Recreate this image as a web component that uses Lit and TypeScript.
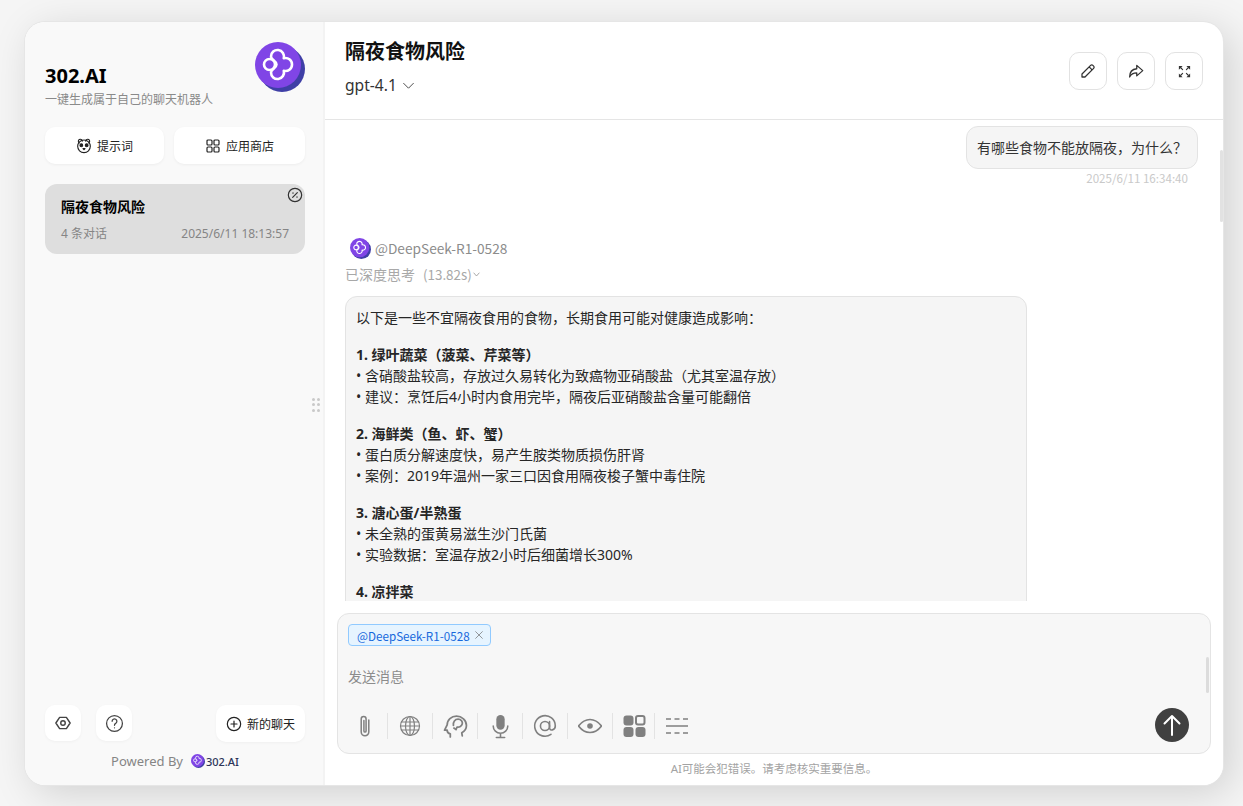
import { LitElement, html, css, svg } from "lit";
import { customElement } from "lit/decorators.js";

const clover = svg`<path d="M16 14.500A6.500 6.500 0 1 1 28.760 16.240A6.500 6.500 0 1 1 28.760 28.760A6.500 6.500 0 1 1 16 30.500C16 27 21.500 26.500 21.500 22.500C21.500 18.500 16 18 16 14.500Z" fill="none" stroke="#fff" stroke-width="2.600" stroke-linejoin="round"/><circle cx="14.500" cy="22.500" r="5.500" fill="#8045e6" stroke="#fff" stroke-width="2.600"/>`;

const logo = (cls: string) => html`<svg class=${cls} viewBox="0 0 50 50"><circle cx="27" cy="27" r="23" fill="#3f3fa6"/><circle cx="23" cy="23" r="23" fill="#8045e6"/>${clover}</svg>`;

const ic = (body: unknown, size = 16, sw = 1.5) => html`<svg width=${size} height=${size} viewBox="0 0 24 24" fill="none" stroke="currentColor" stroke-width=${sw} stroke-linecap="round" stroke-linejoin="round">${body}</svg>`;

const bodyText = [
  { lead: "", lines: ["以下是一些不宜隔夜食用的食物，长期食用可能对健康造成影响："] },
  { lead: "1. 绿叶蔬菜（菠菜、芹菜等）", lines: ["• 含硝酸盐较高，存放过久易转化为致癌物亚硝酸盐（尤其室温存放）", "• 建议：烹饪后4小时内食用完毕，隔夜后亚硝酸盐含量可能翻倍"] },
  { lead: "2. 海鲜类（鱼、虾、蟹）", lines: ["• 蛋白质分解速度快，易产生胺类物质损伤肝肾", "• 案例：2019年温州一家三口因食用隔夜梭子蟹中毒住院"] },
  { lead: "3. 溏心蛋/半熟蛋", lines: ["• 未全熟的蛋黄易滋生沙门氏菌", "• 实验数据：室温存放2小时后细菌增长300%"] },
  { lead: "4. 凉拌菜", lines: [] as string[] },
];

@customElement("app-root")
export class AppRoot extends LitElement {
  static styles = css`
    :host { display: block; height: 806px; box-sizing: border-box; padding: 22px 20px 21px 25px; background: #f5f5f5; font-family: "Noto Sans", "Noto Sans CJK SC", sans-serif; color: #1f1f1f; overflow: hidden; }
    .card { height: 100%; display: flex; background: #fff; border-radius: 20px; box-shadow: 0 0 0 1px #e6e6e6, 8px 8px 40px rgba(0,0,0,.15); overflow: hidden; }
    .side { width: 300px; flex: none; box-sizing: border-box; background: #f9f9f9; border-right: 2px solid #f3f3f3; padding: 20px 18px 13px 20px; display: flex; flex-direction: column; }
    .brand { display: flex; justify-content: space-between; height: 85px; }
    .brand-text { padding-top: 20px; }
    .brand h1 { margin: 0; font-size: 20px; line-height: 28px; font-weight: 700; color: #000; }
    .brand p { margin: 1px 0 0; font-size: 12px; line-height: 18px; color: #8a8a8a; white-space: nowrap; }
    .biglogo { width: 50px; height: 50px; flex: none; }
    .tabs { display: flex; gap: 10px; }
    .tab { height: 37px; border-radius: 10px; background: #fff; box-shadow: 0 1px 3px rgba(0,0,0,.05); display: flex; align-items: center; justify-content: center; gap: 5px; font-size: 12px; color: #222; }
    .tab.a { width: 119px; }
    .tab.b { width: 131px; }
    .session { position: relative; margin-top: 20px; height: 70px; box-sizing: border-box; padding: 12px 16px 0; background: #dedede; border-radius: 12px; }
    .session h2 { margin: 0; font-size: 14px; line-height: 21px; font-weight: 700; color: #000; }
    .meta { display: flex; justify-content: space-between; margin-top: 7px; font-size: 12px; line-height: 20px; color: #858585; }
    .close { position: absolute; top: 3px; right: 2px; color: #333; display: flex; }
    .foot { margin-top: auto; display: flex; align-items: flex-start; }
    .sq { width: 36px; height: 36px; border-radius: 10px; background: #fff; display: flex; align-items: center; justify-content: center; color: #444; box-shadow: 0 1px 3px rgba(0,0,0,.04); }
    .sq + .sq { margin-left: 15px; }
    .new { margin-left: auto; width: 89px; height: 37px; border-radius: 10px; background: #fff; display: flex; align-items: center; justify-content: center; gap: 5px; font-size: 12px; color: #222; box-shadow: 0 1px 3px rgba(0,0,0,.04); }
    .powered { display: flex; align-items: center; justify-content: center; margin-top: 8px; height: 22px; font-size: 13px; color: #858585; }
    .powered b { font-weight: 500; color: #2c3458; font-size: 11px; }
    .tiny { width: 14px; height: 14px; margin: 0 1px 0 8px; }
    .main { flex: 1; min-width: 0; display: flex; flex-direction: column; position: relative; }
    .grip { position: absolute; left: -13px; top: 376px; width: 10px; height: 14px; display: grid; grid-template-columns: 3px 3px; gap: 2px 2px; }
    .grip i { width: 3px; height: 3px; border-radius: 50%; background: #c9c9c9; }
    .head { height: 98px; flex: none; box-sizing: border-box; border-bottom: 1px solid #e5e5e5; padding: 14px 20px 0 20px; display: flex; justify-content: space-between; }
    .head h2 { margin: 0; font-size: 20px; line-height: 32px; font-weight: 700; color: #111; }
    .model { display: flex; align-items: center; gap: 5px; margin-top: 6px; font-size: 15.600px; line-height: 22px; color: #333; }
    .actions { display: flex; gap: 10px; padding-top: 16px; }
    .act { width: 38px; height: 38px; box-sizing: border-box; border: 1px solid #e2e2e2; border-radius: 10px; display: flex; align-items: center; justify-content: center; color: #333; }
    .msgs { flex: 1; min-height: 0; overflow: hidden; position: relative; padding: 6px 20px 0; }
    .sb { position: absolute; right: 0; top: 30px; width: 3px; height: 72px; background: #e2e2e2; border-radius: 2px; }
    .user { display: flex; flex-direction: column; align-items: flex-end; padding-right: 5px; }
    .bubble { background: #f5f5f5; border: 1px solid #e3e3e3; border-radius: 12px; font-size: 14px; line-height: 21px; padding: 10px; color: #333; width: 232px; box-sizing: border-box; white-space: nowrap; }
    .time { font-family: "Noto Sans CJK SC", sans-serif; font-size: 11.600px; line-height: 18px; color: #c9c9c9; padding-right: 10px; }
    .who { display: flex; align-items: center; gap: 4px; margin-top: 50px; padding-left: 5px; height: 22px; font-family: "Noto Sans CJK SC", sans-serif; font-size: 13.700px; color: #8c8c8c; }
    .avatar { width: 21px; height: 21px; }
    .think { margin-top: 4px; height: 22px; display: flex; align-items: center; font-family: "Noto Sans CJK SC", sans-serif; font-size: 14px; color: #a8a8a8; }
    .think span { margin-left: 8px; font-size: 13.400px; }
    .think svg { color: #8c8c8c; }
    .answer { margin-top: 11px; width: 682px; box-sizing: border-box; background: #f5f5f5; border: 1px solid #e3e3e3; border-radius: 12px; padding: 10px; font-size: 14px; line-height: 21px; color: #262626; }
    .answer p { margin: 0 0 16px; }
    .answer strong { display: block; font-weight: 700; }
    .answer div { white-space: nowrap; }
    .inputwrap { flex: none; padding: 12px 12px 0 12px; background: #fff; position: relative; }
    .box { height: 141px; box-sizing: border-box; background: #f7f7f7; border: 1px solid #e4e4e4; border-radius: 12px; position: relative; padding: 10px 10px 0; display: flex; flex-direction: column; }
    .chip { align-self: flex-start; height: 22px; box-sizing: border-box; border: 1px solid #91caff; background: #e6f4ff; border-radius: 4px; display: flex; align-items: center; gap: 4px; padding: 0 6px 0 8px; font-family: "Noto Sans CJK SC", sans-serif; font-size: 11.650px; color: #1668dc; }
    .chip svg { color: #666; }
    .ph { margin-top: 20px; font-size: 14px; line-height: 21px; color: #8c8c8c; }
    .tools { display: flex; align-items: center; height: 28px; margin-top: 25px; margin-left: -5px; }
    .t { width: 45px; height: 26px; display: flex; align-items: center; justify-content: center; color: #808080; border-left: 1px solid #e3e3e3; box-sizing: border-box; }
    .t:first-child { border-left: none; width: 44px; }
    .t.last { width: 42px; }
    .send { position: absolute; right: 21px; bottom: 11px; width: 34px; height: 34px; border-radius: 50%; background: #404040; color: #fff; display: flex; align-items: center; justify-content: center; }
    .boxsb { position: absolute; right: 1px; top: 43px; width: 3px; height: 36px; background: #dcdcdc; border-radius: 2px; }
    .disc { text-align: center; font-size: 11.500px; line-height: 15px; color: #a3a3a3; margin: 7px 0 9px; }
  `;

  render() {
    return html`<div class="card">
      <aside class="side">
        <div class="brand">
          <div class="brand-text"><h1>302.AI</h1><p>一键生成属于自己的聊天机器人</p></div>
          ${logo("biglogo")}
        </div>
        <div class="tabs">
          <div class="tab a">${ic(svg`<path d="M5 7.500a3 3 0 1 1 4.500-2.800M19 7.500a3 3 0 1 0-4.500-2.800"/><circle cx="12" cy="12.500" r="9.500"/><ellipse cx="8" cy="11" rx="2" ry="2.200" fill="currentColor"/><ellipse cx="16" cy="11" rx="2" ry="2.200" fill="currentColor"/><path d="M10.500 16h3l-1.500 1.500z" fill="currentColor"/>`, 16, 1.700)}<span>提示词</span></div>
          <div class="tab b">${ic(svg`<rect x="3" y="3" width="7.500" height="7.500" rx="1.500"/><rect x="13.500" y="3" width="7.500" height="7.500" rx="1.500"/><rect x="3" y="13.500" width="7.500" height="7.500" rx="1.500"/><rect x="13.500" y="13.500" width="7.500" height="7.500" rx="1.500"/>`, 16, 1.800)}<span>应用商店</span></div>
        </div>
        <div class="session">
          <h2>隔夜食物风险</h2>
          <div class="meta"><span>4 条对话</span><span>2025/6/11 18:13:57</span></div>
          <span class="close">${ic(svg`<circle cx="12" cy="12" r="10"/><path d="M8.500 15.500l7-7M8.500 9h1M14.500 15h1"/>`, 16, 1.800)}</span>
        </div>
        <div class="foot">
          <div class="sq">${ic(svg`<path d="M7.500 4.500h9L21.500 12l-5 7.500h-9L2.500 12z"/><circle cx="12" cy="12" r="3"/>`, 18, 1.900)}</div>
          <div class="sq">${ic(svg`<circle cx="12" cy="12" r="10"/><path d="M9 9.200a3 3 0 1 1 4.500 2.600c-1 .6-1.500 1.200-1.500 2.400M12 17.500h.01"/>`, 19, 1.600)}</div>
          <div class="new">${ic(svg`<circle cx="12" cy="12" r="10"/><path d="M12 7.500v9M7.500 12h9"/>`, 16, 1.800)}<span>新的聊天</span></div>
        </div>
        <div class="powered">Powered By ${logo("tiny")}<b>302.AI</b></div>
      </aside>
      <main class="main">
        <div class="grip"><i></i><i></i><i></i><i></i><i></i><i></i></div>
        <header class="head">
          <div>
            <h2>隔夜食物风险</h2>
            <div class="model"><span>gpt-4.1</span>${ic(svg`<path d="M3 8l9 9 9-9"/>`, 13, 1.600)}</div>
          </div>
          <div class="actions">
            <div class="act">${ic(svg`<path d="M15.500 4.500a2.100 2.100 0 0 1 3 0l1 1a2.100 2.100 0 0 1 0 3L8 20H4v-4zM13.500 6.500l4 4"/>`, 18, 1.700)}</div>
            <div class="act">${ic(svg`<path d="M13 4.500l8 7-8 7V14.500C8.500 14.500 5.500 16 3.500 20c0-6.500 3.500-10.500 9.500-11z"/>`, 18, 1.700)}</div>
            <div class="act">${ic(svg`<path d="M3 9V3h6zM21 9V3h-6zM3 15v6h6zM21 15v6h-6z" fill="currentColor" stroke="none"/><path d="M6 6l3 3M18 6l-3 3M6 18l3-3M18 18l-3-3"/>`, 15, 1.700)}</div>
          </div>
        </header>
        <section class="msgs">
          <div class="sb"></div>
          <div class="user">
            <div class="bubble">有哪些食物不能放隔夜，为什么？</div>
            <div class="time">2025/6/11 16:34:40</div>
          </div>
          <div class="who">${logo("avatar")}<span>@DeepSeek-R1-0528</span></div>
          <div class="think">已深度思考<span>(13.82s)</span>${ic(svg`<path d="M5 8l7 8 7-8"/>`, 9, 2)}</div>
          <div class="answer">
            ${bodyText.map((p) => html`<p>${p.lead ? html`<strong>${p.lead}</strong>` : ""}${p.lines.map((l) => html`<div>${l}</div>`)}</p>`)}
          </div>
        </section>
        <section class="inputwrap">
          <div class="box">
            <div class="chip"><span>@DeepSeek-R1-0528</span>${ic(svg`<path d="M4 4l16 16M20 4L4 20"/>`, 10, 1.600)}</div>
            <div class="ph">发送消息</div>
            <div class="boxsb"></div>
            <div class="tools">
              <div class="t">${ic(svg`<path d="M15.500 6.500v11a3.500 3.500 0 0 1-7 0V5.500a2.200 2.200 0 0 1 4.500 0v11a1 1 0 0 1-2 0V7"/>`, 26, 1.400)}</div>
              <div class="t">${ic(svg`<circle cx="12" cy="12" r="9.500"/><ellipse cx="12" cy="12" rx="4.500" ry="9.500"/><path d="M12 2.500v19M3.500 8h17M3.500 16h17M2.500 12h19"/>`, 24, 1.200)}</div>
              <div class="t">${ic(svg`<path d="M7 22v-3c-2.500-.5-3-1.500-3-3.500H1.500l2.500-5C4 5.500 8 2 13 2s9.500 4 9.500 9c0 3.500-1.800 5.500-4.500 7l.5 3"/><path d="M10 11c-.5-3.500 1.500-6 4.500-6s4.500 2.500 4 4.500-2.800 3.500-5 3l-1 2.500-2-1.500"/>`, 25, 1.700)}</div>
              <div class="t">${ic(svg`<rect x="8" y="1" width="8" height="14" rx="4" fill="currentColor" stroke="none"/><path d="M5 11.500a7 7 0 0 0 14 0M12 18.500v4M8 22.500h8"/>`, 25, 1.500)}</div>
              <div class="t">${ic(svg`<circle cx="12" cy="12" r="4.200"/><path d="M16.200 8v5.500c0 3.500 5.300 2.500 5.300-1.500a9.500 9.500 0 1 0-4 7.700"/>`, 26, 1.500)}</div>
              <div class="t">${ic(svg`<path d="M0.500 12C4 7.500 8 5.500 12 5.500s8 2 11.500 6.500c-3.500 4.500-7.500 6.500-11.500 6.500S4 16.500 0.500 12z"/><circle cx="12" cy="12" r="2.800" fill="currentColor" stroke="none"/>`, 24, 1.700)}</div>
              <div class="t last">${ic(svg`<rect x="1.500" y="1.500" width="10" height="10" rx="3" fill="currentColor" stroke="none"/><rect x="14" y="2" width="8.500" height="8.500" rx="2" stroke-width="2"/><rect x="1.500" y="13" width="10" height="10" rx="3" fill="currentColor" stroke="none"/><rect x="13.500" y="13" width="10" height="10" rx="3" fill="currentColor" stroke="none"/>`, 24, 2)}</div>
              <div class="t">${ic(svg`<path d="M1 5h5M9.500 5h5M18 5h5M1 12h22M1 19h5M9.500 19h5M18 19h5" stroke-linecap="butt"/>`, 24, 1.600)}</div>
            </div>
            <div class="send">${ic(svg`<path d="M12 22V3M4.500 10.500L12 3l7.500 7.500"/>`, 24, 2)}</div>
          </div>
          <div class="disc">AI可能会犯错误。请考虑核实重要信息。</div>
        </section>
      </main>
    </div>`;
  }
}
